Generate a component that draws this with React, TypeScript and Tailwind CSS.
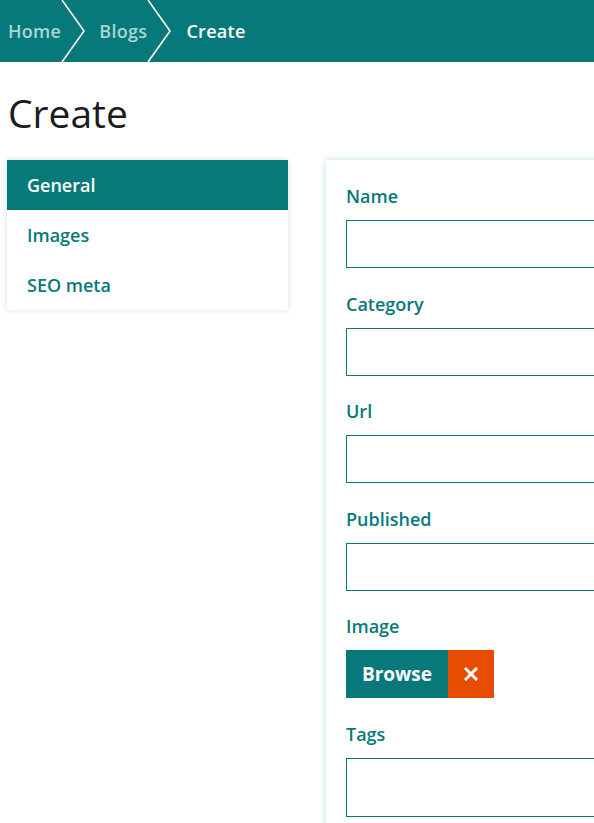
import { useState } from "react"

const fields = ["Name", "Category", "Url", "Published"]

function Chevron() {
  return (
    <svg width="26" height="62" viewBox="0 0 26 62" className="shrink-0">
      <polyline points="1,0 23,31 1,62" fill="none" stroke="white" strokeWidth="1.6" />
    </svg>
  )
}

export default function App() {
  const [tab, setTab] = useState("General")
  const tabs = ["General", "Images", "SEO meta"]

  return (
    <div className="min-h-screen bg-white font-['Open_Sans',sans-serif] overflow-hidden">
      <nav className="h-[62px] bg-[#08797a] flex items-center pl-2 text-[18px] font-semibold tracking-[0.3px]">
        <span className="text-[#a8d6d5]">Home</span>
        <span className="mr-[12px]"><Chevron /></span>
        <span className="text-[#a8d6d5]">Blogs</span>
        <span className="mr-[13px]"><Chevron /></span>
        <span className="text-white">Create</span>
      </nav>

      <h1 className="pl-2 pt-[26px] pb-[22px] text-[39px] leading-[50px] text-[#1b1b1b] font-normal">
        Create
      </h1>

      <div className="flex items-start gap-[38px] pl-[7px]">
        <ul className="w-[281px] shrink-0 bg-white shadow-[0_0_6px_rgba(8,121,122,0.22)]">
          {tabs.map((t) => (
            <li
              key={t}
              onClick={() => setTab(t)}
              className={`h-[50px] flex items-center pl-5 text-[18px] font-semibold cursor-pointer ${
                tab === t ? "bg-[#08797a] text-white" : "text-[#08797a]"
              }`}
            >
              {t}
            </li>
          ))}
        </ul>

        <div className="flex-1 min-w-[300px] bg-white shadow-[0_0_7px_rgba(8,121,122,0.25)] pt-6 pl-5 pb-6">
          {fields.map((f) => (
            <div key={f} className="mb-[23.6px]">
              <label className="block text-[18px] leading-6 font-semibold text-[#08797a] mb-3">{f}</label>
              <input className="block w-[400px] h-12 border border-[#08797a] outline-none px-3" />
            </div>
          ))}

          <div className="mb-[23.6px]">
            <label className="block text-[18px] leading-6 font-semibold text-[#08797a] mb-3">Image</label>
            <div className="flex h-12">
              <button className="w-[102px] bg-[#08797a] text-white text-[19px] font-bold">Browse</button>
              <button className="w-[46px] bg-[#e84c03] flex items-center justify-center">
                <svg width="14" height="14" viewBox="0 0 14 14">
                  <path d="M2 2 L12 12 M12 2 L2 12" stroke="white" strokeWidth="3" strokeLinecap="square" />
                </svg>
              </button>
            </div>
          </div>

          <div>
            <label className="block text-[18px] leading-6 font-semibold text-[#08797a] mb-3">Tags</label>
            <textarea className="block w-[400px] h-[59px] border border-[#08797a] outline-none px-3 resize-none" />
          </div>
        </div>
      </div>
    </div>
  )
}
